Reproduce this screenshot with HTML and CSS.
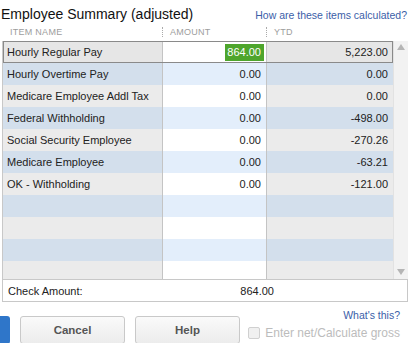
FILE: index.html
```html
<!DOCTYPE html>
<html lang="en">
  <head>
    <meta charset="utf-8" />
    <title>Employee Summary (adjusted)</title>
    <link rel="stylesheet" href="styles.css">
  </head>
  <body>
    <header class="title-row">
      <h1>Employee Summary (adjusted)</h1>
      <a href="#" class="link">How are these items calculated?</a>
    </header>

    <div class="cols head">
      <span class="h-name">ITEM NAME</span>
      <span class="h-amt">AMOUNT</span>
      <span class="h-ytd">YTD</span>
    </div>

    <div class="grid-wrap">
      <div class="rows">
        <div class="cols row sel">
          <span class="c-name">Hourly Regular Pay</span>
          <span class="c-amt"><span class="edit">864.00</span></span>
          <span class="c-ytd">5,223.00</span>
        </div>
        <div class="cols row">
          <span class="c-name">Hourly Overtime Pay</span>
          <span class="c-amt">0.00</span>
          <span class="c-ytd">0.00</span>
        </div>
        <div class="cols row">
          <span class="c-name">Medicare Employee Addl Tax</span>
          <span class="c-amt">0.00</span>
          <span class="c-ytd">0.00</span>
        </div>
        <div class="cols row">
          <span class="c-name">Federal Withholding</span>
          <span class="c-amt">0.00</span>
          <span class="c-ytd">-498.00</span>
        </div>
        <div class="cols row">
          <span class="c-name">Social Security Employee</span>
          <span class="c-amt">0.00</span>
          <span class="c-ytd">-270.26</span>
        </div>
        <div class="cols row">
          <span class="c-name">Medicare Employee</span>
          <span class="c-amt">0.00</span>
          <span class="c-ytd">-63.21</span>
        </div>
        <div class="cols row">
          <span class="c-name">OK - Withholding</span>
          <span class="c-amt">0.00</span>
          <span class="c-ytd">-121.00</span>
        </div>
        <div class="cols row"><span class="c-name"></span><span class="c-amt"></span><span class="c-ytd"></span></div>
        <div class="cols row"><span class="c-name"></span><span class="c-amt"></span><span class="c-ytd"></span></div>
        <div class="cols row"><span class="c-name"></span><span class="c-amt"></span><span class="c-ytd"></span></div>
        <div class="cols row"><span class="c-name"></span><span class="c-amt"></span><span class="c-ytd"></span></div>
      </div>
      <div class="scrollbar">
        <span class="arrow up"></span>
        <span class="arrow down"></span>
      </div>
    </div>

    <div class="check">
      <span>Check Amount:</span>
      <span class="check-val">864.00</span>
    </div>

    <footer class="bottom">
      <div class="buttons">
        <button class="btn primary"></button>
        <button class="btn">Cancel</button>
        <button class="btn">Help</button>
      </div>
      <div class="side">
        <a href="#" class="link">What's this?</a>
        <label class="net">
          <span class="box"></span>
          Enter net/Calculate gross
        </label>
      </div>
    </footer>
  </body>
</html>
```

FILE: styles.css
```css
* {
  box-sizing: border-box;
}

html,
body {
  margin: 0;
  padding: 0;
}

body {
  width: 411px;
  height: 343px;
  overflow: hidden;
  background: #fff;
  color: #222;
  font-family: "Liberation Sans", Arial, sans-serif;
  font-size: 11px;
}

.link {
  color: #3b5ea8;
  text-decoration: none;
  font-size: 10.5px;
}

.title-row {
  display: flex;
  justify-content: space-between;
  align-items: baseline;
  height: 24px;
  padding: 6px 4px 0 1px;
}
.title-row h1 {
  margin: 0;
  font-size: 14px;
  line-height: 16px;
  font-weight: normal;
  color: #111;
}

.cols {
  display: grid;
  grid-template-columns: 159px 104px 127px;
}

.head {
  height: 16px;
  margin-left: 3px;
  font-size: 9px;
  color: #9d9d9d;
  letter-spacing: 0.03em;
  align-items: center;
}
.head span {
  padding-left: 7px;
}
.h-amt,
.h-ytd {
  border-left: 1px dotted #aaa;
}

.grid-wrap {
  display: flex;
  height: 238px;
  margin: 1px 3px 0 2px;
  overflow: hidden;
  border-left: 1px solid #c8c8c8;
}

.rows {
  width: 390px;
}

.row {
  height: 22px;
  line-height: 22px;
}
.row span {
  padding: 0 4px;
  white-space: nowrap;
}
.c-amt,
.c-ytd {
  text-align: right;
  border-left: 1px solid #c4c4c4;
}
.c-amt {
  padding-right: 5px !important;
}
.c-ytd {
  padding-right: 5px !important;
}

.row:nth-child(odd) .c-name,
.row:nth-child(odd) .c-ytd {
  background: #ebebeb;
}
.row:nth-child(even) .c-name,
.row:nth-child(even) .c-ytd {
  background: #d3dfec;
}
.row:nth-child(odd) .c-amt {
  background: #fff;
}
.row:nth-child(even) .c-amt {
  background: #e3eefb;
}

.sel {
  outline: 1px solid #8a8a8a;
  outline-offset: -1px;
}
.sel .c-name,
.sel .c-ytd {
  background: #e6e6e6 !important;
}
.sel .c-amt {
  padding-right: 2px !important;
}
.edit {
  display: inline-block;
  line-height: 17px;
  padding: 0 3px 0 2px !important;
  background: #4ea52c;
  color: #fff;
}

.scrollbar {
  position: relative;
  width: 15px;
  background: #f2f2f2;
  border-left: 1px solid #e2e2e2;
}
.arrow {
  position: absolute;
  left: 3px;
  width: 0;
  height: 0;
  border-left: 4px solid transparent;
  border-right: 4px solid transparent;
}
.arrow.up {
  top: 3px;
  border-bottom: 6px solid #b5b5b5;
}
.arrow.down {
  bottom: 4px;
  border-top: 6px solid #b5b5b5;
}

.check {
  display: grid;
  grid-template-columns: 159px 112px;
  height: 23px;
  margin: 0 3px 0 2px;
  border: 1px solid #c8c8c8;
  align-items: center;
}
.check span {
  padding-left: 5px;
}
.check-val {
  text-align: right;
}

.bottom {
  display: flex;
  justify-content: space-between;
  padding-right: 11px;
}

.buttons {
  display: flex;
  gap: 9px;
  padding-top: 14px;
}
.btn {
  width: 105px;
  height: 28px;
  padding: 0;
  border: 1px solid #c9c9c9;
  border-radius: 3px;
  background: linear-gradient(#fafafa, #ececec);
  font-family: "Liberation Sans", Arial, sans-serif;
  font-size: 11.5px;
  font-weight: bold;
  color: #555;
}
.btn + .btn {
  margin-left: 1px;
}
.btn.primary {
  width: 10px;
  border: none;
  border-radius: 0 3px 3px 0;
  background: #2f76c9;
}

.side {
  display: flex;
  flex-direction: column;
  align-items: flex-end;
  padding-top: 7px;
}
.side .link {
  line-height: 12px;
}
.net {
  display: flex;
  align-items: center;
  gap: 5px;
  margin-top: 5px;
  line-height: 14px;
  color: #bcbcbc;
  font-size: 12px;
}
.box {
  width: 12px;
  height: 12px;
  border: 1px solid #d0d0d0;
  border-radius: 2px;
  background: #f0f0f0;
}
```
